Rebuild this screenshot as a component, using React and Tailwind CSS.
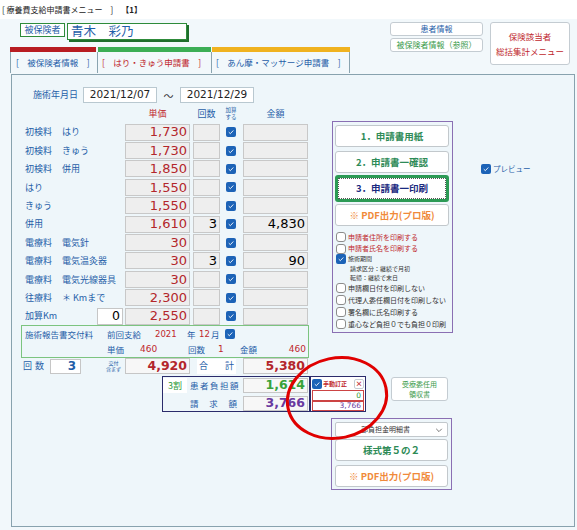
import React from "react";

const JP = "font-['Noto_Sans_CJK_JP',sans-serif]";
const NUM = "font-['DejaVu_Sans','Noto_Sans_CJK_JP',sans-serif]";

function Check({ on }) {
  if (on) {
    return (
      <span className="inline-flex w-[10px] h-[10px] shrink-0 rounded-[2px] bg-[#1c63b7] items-center justify-center">
        <svg viewBox="0 0 10 10" className="w-[8px] h-[8px]">
          <path d="M2.2 5.2 L4.2 7.1 L7.9 3.1" stroke="white" strokeWidth="1.1" fill="none" />
        </svg>
      </span>
    );
  }
  return <span className="inline-block w-[10px] h-[10px] shrink-0 rounded-[3px] border border-[#8c8c8c] bg-white" />;
}

const rows = [
  { a: "初検料", b: "はり", unit: "1,730" },
  { a: "初検料", b: "きゅう", unit: "1,730" },
  { a: "初検料", b: "併用", unit: "1,850" },
  { a: "はり", unit: "1,550" },
  { a: "きゅう", unit: "1,550" },
  { a: "併用", unit: "1,610", count: "3", amount: "4,830" },
  { a: "電療料", b: "電気針", unit: "30" },
  { a: "電療料", b: "電気温灸器", unit: "30", count: "3", amount: "90" },
  { a: "電療料", b: "電気光線器具", unit: "30" },
  { a: "往療料", b: "＊ Kmまで", unit: "2,300" },
  { a: "加算Km", unit: "2,550", km: "0" },
];

const grayBox = "h-[17px] bg-[#eeeeee] border border-[#c8c8c8] flex items-center justify-end pr-[2px]";

function FeeRow({ r }) {
  return (
    <div className="flex items-center h-[18.4px] ml-[13px]">
      {r.km ? (
        <>
          <span className="w-[72px] text-[9px] text-[#1f5ea8]">{r.a}</span>
          <span className={`w-[26px] h-[17px] bg-white border border-[#c6c6c6] flex items-center justify-end pr-[2px] text-[12.5px] text-black ${NUM}`}>{r.km}</span>
          <span className="w-[2px]" />
        </>
      ) : (
        <span className="w-[100px] flex text-[9px] text-[#1f5ea8]">
          <span className="w-[37px]">{r.a}</span>
          {r.b && <span>{r.b}</span>}
        </span>
      )}
      <span className={`w-[65px] ${grayBox} text-[13px] text-[#b3262b] ${NUM}`}>{r.unit}</span>
      <span className={`w-[27px] ml-[3px] ${grayBox} text-[13px] text-black ${NUM}`}>{r.count || ""}</span>
      <span className="ml-[6px] flex"><Check on /></span>
      <span className={`w-[65px] ml-[7px] ${grayBox} text-[13px] text-black ${NUM}`}>{r.amount || ""}</span>
    </div>
  );
}

function MenuBtn({ children, color, thick }) {
  return (
    <div
      className={`w-[114px] bg-white rounded-[3px] flex items-center justify-center text-[9.5px] font-bold ${color} ${
        thick ? "h-[27px] border-[3px] border-[#2c9a55]" : "h-[22px] border border-[#c2c8cc]"
      }`}
    >
      {thick ? (
        <span className="w-full h-full border border-dotted border-[#555] flex items-center justify-center">{children}</span>
      ) : (
        children
      )}
    </div>
  );
}

function Opt({ on, children, color = "text-[#333]", h = "h-[12px]" }) {
  return (
    <div className={`flex items-center gap-[2px] ${h}`}>
      <Check on={on} />
      <span className={`text-[7px] leading-none whitespace-nowrap ${color}`}>{children}</span>
    </div>
  );
}

export default function App() {
  return (
    <div className={`relative w-[577px] h-[530px] overflow-hidden bg-[#f2f8fb] ${JP}`}>
      {/* title */}
      <div className="h-[19px] bg-white flex items-center pl-[2px] text-[8px] text-[#222]">
        <span>[ 療養費支給申請書メニュー　]　</span>
        <span className="font-bold">【1】</span>
      </div>

      {/* header */}
      <div className="flex h-[55px]">
        <div className="w-[380px]">
          <div className="flex items-start mt-[4px] ml-[20px]">
            <div className="w-[45px] h-[14px] bg-white border border-[#2e8b3a] flex items-center justify-center text-[9px] text-[#1f5ea8]">
              被保険者
            </div>
            <div className="ml-[2px] w-[120px] h-[17px] bg-white border border-[#2e8b3a] shadow-[2px_2px_0_#1f6e2c] flex items-center pl-[3px] text-[12.5px] text-[#1f5ea8]">
              青木　彩乃
            </div>
          </div>
          <div className="flex ml-[10px] mt-[7px]">
            <div className="w-[88px]">
              <div className="h-[5px] bg-[#b81d22] mr-[2px]" />
              <div className="h-[21px] border-l border-r border-[#8aa4b0] flex items-center pl-[5px] text-[8.5px] text-[#1f5ea8] whitespace-nowrap">
                [　被保険者情報　]
              </div>
            </div>
            <div className="w-[114px]">
              <div className="h-[5px] bg-[#3cae55] mr-[1px]" />
              <div className="h-[21px] border-r border-[#8aa4b0] flex items-center pl-[4px] text-[8.5px] text-[#c0282d] whitespace-nowrap">
                [　はり・きゅう申請書　]
              </div>
            </div>
            <div className="w-[138px]">
              <div className="h-[5px] bg-[#f0b21f]" />
              <div className="h-[21px] border-r border-[#8aa4b0] flex items-center pl-[4px] text-[8.5px] text-[#1f5ea8] whitespace-nowrap">
                [　あん摩・マッサージ申請書　]
              </div>
            </div>
          </div>
        </div>
        <div className="ml-[10px] mt-[3px] flex flex-col gap-[2px]">
          <div className="w-[93px] h-[14px] bg-white border border-[#c4ccd2] rounded-[3px] flex items-center justify-center text-[8px] text-[#1f5ea8]">
            患者情報
          </div>
          <div className="w-[93px] h-[14px] bg-white border border-[#c4ccd2] rounded-[3px] flex items-center justify-center text-[8px] text-[#3a9a4a]">
            被保険者情報（参照）
          </div>
        </div>
        <div className="ml-[7px] mt-[3px] w-[80px] h-[43px] bg-white border border-[#c4ccd2] rounded-[3px] flex flex-col items-center justify-center text-[8.5px] leading-[15px] text-[#c0282d]">
          <span>保険該当者</span>
          <span>総括集計メニュー</span>
        </div>
      </div>

      {/* panel */}
      <div className="ml-[11px] w-[564px] h-[453px] border border-[#88a2ae] bg-[#eef6fa]">
        <div className="flex items-start h-[283px]">
          {/* left column */}
          <div className="w-[320px]">
            <div className="flex items-center mt-[12px] h-[16px]">
              <span className="ml-[21px] w-[50px] text-[9px] text-[#1f5ea8]">施術年月日</span>
              <span className={`w-[74px] h-[16px] bg-white border border-[#b9c8d0] flex items-center justify-center text-[10.5px] text-[#222] ${NUM}`}>2021/12/07</span>
              <span className="w-[23px] text-center text-[10px] text-[#333]">～</span>
              <span className={`w-[74px] h-[16px] bg-white border border-[#b9c8d0] flex items-center justify-center text-[10.5px] text-[#222] ${NUM}`}>2021/12/29</span>
            </div>
            <div className="flex items-end h-[20px] pb-[3px] ml-[113px]">
              <span className="w-[65px] text-center text-[9px] text-[#c0282d]">単価</span>
              <span className="w-[27px] ml-[3px] text-center text-[9px] text-[#1f5ea8]">回数</span>
              <span className="w-[16px] ml-[3px] flex flex-col items-center text-[5.5px] leading-[6.5px] text-[#1f5ea8]">
                <span>加算</span>
                <span>する</span>
              </span>
              <span className="w-[65px] ml-[4px] text-center text-[9px] text-[#1f5ea8]">金額</span>
            </div>
            {rows.map((r, i) => (
              <FeeRow key={i} r={r} />
            ))}
            <div className="ml-[9px] w-[288px] h-[33px] border border-[#7cc47f] flex flex-col justify-center gap-[3px] text-[8.5px] text-[#1f5ea8]">
              <div className="flex items-center h-[12px] pl-[3px]">
                <span className="w-[82px] whitespace-nowrap">施術報告書交付料</span>
                <span className="w-[48px]">前回支給</span>
                <span className={`w-[32px] text-[8.5px] text-[#c0282d] ${NUM}`}>2021</span>
                <span className="w-[12px]">年</span>
                <span className={`w-[12px] text-[8.5px] text-[#c0282d] ${NUM}`}>12</span>
                <span className="w-[14px]">月</span>
                <Check on />
              </div>
              <div className="flex items-center h-[12px] pl-[3px]">
                <span className="w-[82px]" />
                <span className="w-[33px]">単価</span>
                <span className={`w-[48px] text-[9px] text-[#c0282d] ${NUM}`}>460</span>
                <span className="w-[30px]">回数</span>
                <span className={`w-[22px] text-[9px] text-[#c0282d] ${NUM}`}>1</span>
                <span className="w-[30px]">金額</span>
                <span className={`flex-1 text-right pr-[2px] text-[9px] text-[#c0282d] ${NUM}`}>460</span>
              </div>
            </div>
          </div>

          {/* print menu */}
          <div className="mt-[46px] w-[121px] h-[212px] border border-[#8a6fb3] pt-[3px] pl-[2px]">
            <MenuBtn color="text-[#2e8b57]">1．申請書用紙</MenuBtn>
            <div className="h-[4px]" />
            <MenuBtn color="text-[#2e8b57]">2．申請書一確認</MenuBtn>
            <div className="h-[2px]" />
            <MenuBtn color="text-[#1a2a80]" thick>3．申請書一印刷</MenuBtn>
            <div className="h-[2px]" />
            <MenuBtn color="text-[#f08a3a]">※ PDF出力(プロ版)</MenuBtn>
            <div className="mt-[5px] pl-[1px]">
              <Opt color="text-[#c0282d]">申請者住所を印刷する</Opt>
              <Opt color="text-[#c0282d]" h="h-[11px]">申請者氏名を印刷する</Opt>
              <div className="flex items-center gap-[2px] h-[10px]">
                <Check on />
                <span className="text-[6px] leading-none text-[#333]">施術期間</span>
              </div>
              <div className="h-[9px] pl-[14px] flex items-center text-[6px] leading-none text-[#333] whitespace-nowrap">請求区分：継続で月初</div>
              <div className="h-[9px] pl-[14px] flex items-center text-[6px] leading-none text-[#333] whitespace-nowrap">転帰：継続で末日</div>
              <Opt>申請欄日付を印刷しない</Opt>
              <Opt>代理人委任欄日付を印刷しない</Opt>
              <Opt>署名欄に氏名印刷する</Opt>
              <Opt>重心など負担０でも負担０印刷</Opt>
            </div>
          </div>

          {/* preview */}
          <div className="ml-[28px] mt-[88px] flex items-center gap-[2px]">
            <Check on />
            <span className="text-[7.5px] text-[#1f5ea8]">プレビュー</span>
          </div>
        </div>

        {/* totals */}
        <div className="flex items-center h-[16px]">
          <span className="ml-[11px] w-[27px] text-[9px] text-[#1f5ea8] tracking-[3px]">回数</span>
          <span className={`w-[31px] h-[15px] bg-white border border-[#c6c6c6] flex items-center justify-end pr-[4px] text-[12px] font-bold text-[#1f5ea8] ${NUM}`}>3</span>
          <span className="ml-[21px] w-[23px] flex flex-col items-center text-[5px] leading-[6px] text-[#1f5ea8]">
            <span>交付</span>
            <span>含まず</span>
          </span>
          <span className={`w-[65px] h-[16px] bg-[#f7f7f7] border border-[#c6c6c6] flex items-center justify-end pr-[2px] text-[12.5px] font-bold text-[#b3262b] ${NUM}`}>4,920</span>
          <span className="ml-[7px] w-[39px] h-[15px] bg-white flex items-center justify-between px-[2px] text-[9px] text-[#1f5ea8]">
            <span>合</span>
            <span>計</span>
          </span>
          <span className={`ml-[7px] w-[65px] h-[16px] bg-[#f7f7f7] border border-[#c6c6c6] flex items-center justify-end pr-[2px] text-[12.5px] font-bold text-[#b3262b] ${NUM}`}>5,380</span>
        </div>

        {/* burden */}
        <div className="flex items-start mt-[2px]">
          <div className="ml-[150px] w-[148px] h-[36px] border border-[#2b2b6b] pt-[1px] flex flex-col gap-[3px]">
            <div className="flex items-center h-[15px]">
              <span className="w-[24px] h-[15px] bg-white flex items-center justify-center text-[9px] text-[#2e9a3a]">3割</span>
              <span className="ml-[3px] w-[53px] text-[8.5px] text-[#1f5ea8] tracking-[1.5px]">患者負担額</span>
              <span className={`w-[65px] h-[15px] bg-[#f7f7f7] border border-[#c6c6c6] flex items-center justify-end pr-[2px] text-[12.5px] font-bold text-[#38a23a] ${NUM}`}>1,614</span>
            </div>
            <div className="flex items-center h-[15px]">
              <span className="ml-[27px] w-[53px] flex justify-between pr-[6px] text-[8.5px] text-[#1f5ea8]">
                <span>請</span>
                <span>求</span>
                <span>額</span>
              </span>
              <span className={`w-[65px] h-[15px] bg-[#f7f7f7] border border-[#c6c6c6] flex items-center justify-end pr-[2px] text-[12.5px] font-bold text-[#6a3aa0] ${NUM}`}>3,766</span>
            </div>
          </div>
          <div className="w-[56px] h-[36px] border border-[#2b2b6b] bg-white flex flex-col">
            <div className="flex items-center h-[13px] pl-[1px]">
              <Check on />
              <span className="ml-[1px] text-[6px] font-bold text-[#c0282d] whitespace-nowrap">手動訂正</span>
              <span className="ml-auto mr-[1px] w-[10px] h-[10px] border border-[#c4ccd2] rounded-[2px] bg-white flex items-center justify-center text-[7px] font-bold text-[#c0282d] leading-none">×</span>
            </div>
            <div className={`h-[11px] mx-[1px] border border-[#c44] flex items-center justify-end pr-[2px] text-[7.5px] text-[#2e9a3a] ${NUM}`}>0</div>
            <div className={`h-[10px] mx-[1px] border border-[#c44] flex items-center justify-end pr-[2px] text-[7.5px] text-[#6a3aa0] ${NUM}`}>3,766</div>
          </div>
          <div className="ml-[25px] mt-[1px] w-[57px] h-[24px] bg-white border border-[#c4ccd2] rounded-[3px] flex flex-col items-center justify-center text-[7px] leading-[10px] text-[#3a9a4a]">
            <span>受療委任用</span>
            <span>領収書</span>
          </div>
        </div>

        {/* bottom print menu */}
        <div className="mt-[6px] ml-[319px] w-[121px] h-[72px] border border-[#8a6fb3] pt-[3px] pl-[3px]">
          <div className="w-[113px] h-[15px] bg-white border border-[#c2c8cc] rounded-[2px] flex items-center text-[7px] text-[#333]">
            <span className="flex-1 text-center">部負担金明細書</span>
            <svg viewBox="0 0 10 10" className="w-[8px] h-[8px] mr-[4px]">
              <path d="M1.5 3.5 L5 7 L8.5 3.5" stroke="#555" strokeWidth="1" fill="none" />
            </svg>
          </div>
          <div className="h-[2px]" />
          <div className="w-[113px] h-[22px] bg-white border border-[#c2c8cc] rounded-[3px] flex items-center justify-center text-[9.5px] font-bold text-[#2e8b57]">
            様式第５の２
          </div>
          <div className="h-[4px]" />
          <div className="w-[113px] h-[22px] bg-white border border-[#c2c8cc] rounded-[3px] flex items-center justify-center text-[9.5px] font-bold text-[#f08a3a]">
            ※ PDF出力(プロ版)
          </div>
        </div>
      </div>

      {/* red annotation ellipse */}
      <svg className="absolute left-[280px] top-[352px] w-[112px] h-[92px] pointer-events-none" viewBox="0 0 112 92">
        <ellipse cx="57" cy="46" rx="50" ry="40" transform="rotate(-12 57 46)" stroke="#e00000" strokeWidth="3" fill="none" />
      </svg>
    </div>
  );
}
